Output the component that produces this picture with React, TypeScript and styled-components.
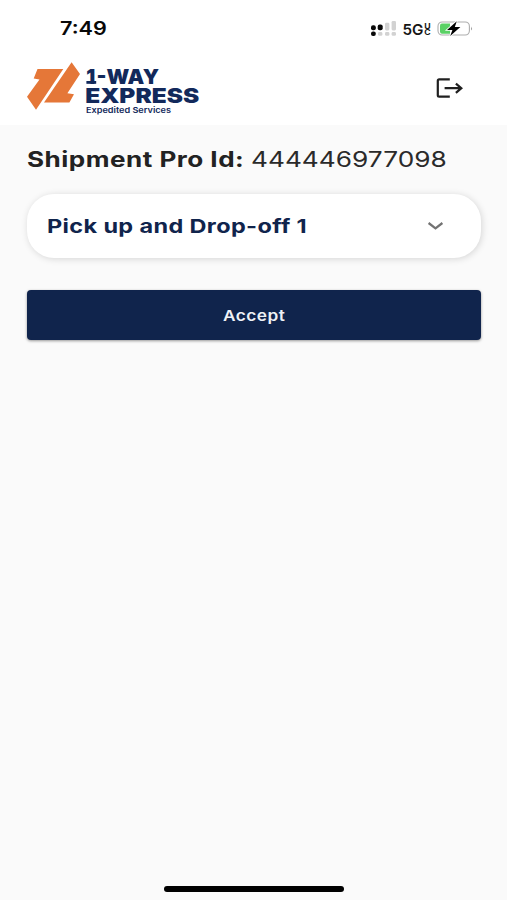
import React from "react";
import styled, { createGlobalStyle } from "styled-components";

const GlobalStyle = createGlobalStyle`
  * { box-sizing: border-box; }
  body { margin: 0; background: #fafafa; font-family: Inter, "Liberation Sans", sans-serif; }
`;

const Screen = styled.div`
  width: 507px;
  height: 900px;
  display: flex;
  flex-direction: column;
  background: #fafafa;
  overflow: hidden;
`;

const StatusBar = styled.div`
  height: 56px;
  padding: 0 34px 0 60px;
  display: flex;
  align-items: center;
  justify-content: space-between;
  background: #fff;
`;

const WideText = styled.span<{
  $size: number;
  $weight: number;
  $stretch: number;
  $color: string;
  $spacing?: number;
}>`
  display: block;
  padding-top: 2px;
  font-size: ${(p) => p.$size}px;
  font-weight: ${(p) => p.$weight};
  color: ${(p) => p.$color};
  letter-spacing: ${(p) => p.$spacing ?? 0}px;
  line-height: 24px;
  white-space: nowrap;
  transform: scaleX(${(p) => p.$stretch});
  transform-origin: left center;
`;

const Header = styled.header`
  height: 69px;
  padding: 0 42px 5px 26px;
  display: flex;
  align-items: center;
  justify-content: space-between;
  background: #fff;
`;

const IconButton = styled.button`
  display: flex;
  padding: 0;
  border: 0;
  background: none;
`;

const Content = styled.main`
  flex: 1;
  padding: 21px 26px 0 27px;
  display: flex;
  flex-direction: column;
`;

const ShipmentLine = styled.div`
  display: grid;
  grid-template-columns: 224px 1fr;
  height: 26px;
`;

const Accordion = styled.section`
  height: 64px;
  margin-top: 22px;
  padding: 0 37px 0 20px;
  display: flex;
  align-items: center;
  justify-content: space-between;
  border-radius: 27px;
  background: #fff;
  box-shadow: 1px 1px 7px rgba(0, 0, 0, 0.15);
`;

const AcceptButton = styled.button`
  height: 50px;
  margin-top: 32px;
  padding: 0 0 0 196px;
  display: flex;
  align-items: center;
  border: 0;
  border-radius: 4px;
  font-family: inherit;
  background: #10244c;
  box-shadow: 0 1px 3px rgba(0, 0, 0, 0.4);
`;

const HomeIndicator = styled.div`
  width: 180px;
  height: 6px;
  margin: 0 auto 8px 164px;
  border-radius: 3px;
  background: #000;
`;

const StatusIcons = () => (
  <svg width="103" height="24" viewBox="370 16 103 24" role="img" aria-label="5G UC, charging">
    <g fill="#080808">
      <rect x="371" y="25.2" width="4.8" height="5" rx="2" />
      <rect x="377.7" y="24.6" width="5" height="5.6" rx="2" />
      <rect x="371" y="31.6" width="4.8" height="4.4" rx="2" />
    </g>
    <g fill="#d2d2d2">
      <rect x="385" y="22.8" width="4.4" height="7.6" rx="1.3" />
      <rect x="391.6" y="21" width="4.4" height="9.4" rx="1.3" />
      <rect x="378" y="32" width="4.4" height="3.8" rx="1.4" />
      <rect x="385" y="32" width="4.4" height="3.8" rx="1.4" />
      <rect x="391.6" y="32" width="4.4" height="3.8" rx="1.4" />
    </g>
    <g fontFamily="Inter, sans-serif" fill="#161616">
      <text x="402.5" y="34.5" fontSize="15" fontWeight="600" textLength="21" lengthAdjust="spacingAndGlyphs">5G</text>
      <text x="424.3" y="28.6" fontSize="7.2" fontWeight="700" textLength="6.4" lengthAdjust="spacingAndGlyphs">U</text>
      <text x="424.3" y="35" fontSize="7.2" fontWeight="700" textLength="6.4" lengthAdjust="spacingAndGlyphs">C</text>
    </g>
    <rect x="438" y="22" width="31.4" height="13" rx="4.2" fill="#fff" stroke="#adadad" strokeWidth="1.1" />
    <path d="M442 23.5H450V33.7H442Q440 33.7 440 31.5V25.7Q440 23.5 442 23.5Z" fill="#5ad165" />
    <path d="M471 26.4Q472.8 28.4 471 30.5Z" fill="#999" />
    <path d="M456.8 21.2L447 29.9H452.4L450.2 36L460.4 27.1H454.8Z" fill="#000" stroke="#fff" strokeWidth="1.6" paintOrder="stroke" />
  </svg>
);

const Logo = () => (
  <svg width="174" height="60" viewBox="26 58 174 60" role="img" aria-label="1-Way Express Expedited Services">
    <g fill="#e57738">
      <path d="M37.5 69H63.3L36 109.8L27 96.8L39.5 79.5L33.7 78.6Z" />
      <path d="M71.6 62.3L80 74L67.4 93.3L74 94.3L69.4 102.4H44Z" />
    </g>
    <g fontFamily="Inter, sans-serif" fill="#12295b">
      <text x="86.2" y="83.8" fontSize="20" fontWeight="900" textLength="9" lengthAdjust="spacingAndGlyphs">1</text>
      <rect x="86.4" y="81" width="9.8" height="2.8" />
      <text x="96.6" y="83.8" fontSize="20" fontWeight="900" textLength="62.4" lengthAdjust="spacingAndGlyphs">-WAY</text>
      <text x="85.2" y="102.5" fontSize="20" fontWeight="900" textLength="114" lengthAdjust="spacingAndGlyphs">EXPRESS</text>
      <text x="86" y="112.8" fontSize="7.8" fontWeight="600" textLength="85" lengthAdjust="spacingAndGlyphs">Expedited Services</text>
    </g>
  </svg>
);

const LogoutIcon = () => (
  <svg width="29" height="24" viewBox="436 76 29 24" fill="none" stroke="#202020" strokeWidth="2.2">
    <path d="M449.8 79.3H439.2Q437.8 79.3 437.8 80.7V95.3Q437.8 96.7 439.2 96.7H449.8" />
    <path d="M444.6 88.2H461M455.9 83.6L461.3 88.2L455.9 92.8" />
  </svg>
);

const Chevron = () => (
  <svg width="17" height="10" viewBox="0 0 17 10" fill="none" stroke="#737373" strokeWidth="2.3">
    <path d="M1.6 2L8.5 7.3L15.4 2" />
  </svg>
);

export default function App() {
  return (
    <>
      <GlobalStyle />
      <Screen>
        <StatusBar>
          <WideText $size={18} $weight={600} $stretch={1.2} $color="#080808">7:49</WideText>
          <StatusIcons />
        </StatusBar>
        <Header>
          <Logo />
          <IconButton aria-label="Log out"><LogoutIcon /></IconButton>
        </Header>
        <Content>
          <ShipmentLine>
            <WideText $size={21} $weight={700} $stretch={1.24} $spacing={0.4} $color="#222">Shipment Pro Id:</WideText>
            <WideText $size={21} $weight={400} $stretch={1.25} $color="#2a2a2a">444446977098</WideText>
          </ShipmentLine>
          <Accordion>
            <WideText $size={19} $weight={700} $stretch={1.235} $spacing={0.3} $color="#10244c">Pick up and Drop-off 1</WideText>
            <Chevron />
          </Accordion>
          <AcceptButton>
            <WideText $size={15} $weight={600} $stretch={1.15} $spacing={0.4} $color="#eef1f6">Accept</WideText>
          </AcceptButton>
        </Content>
        <HomeIndicator />
      </Screen>
    </>
  );
}
